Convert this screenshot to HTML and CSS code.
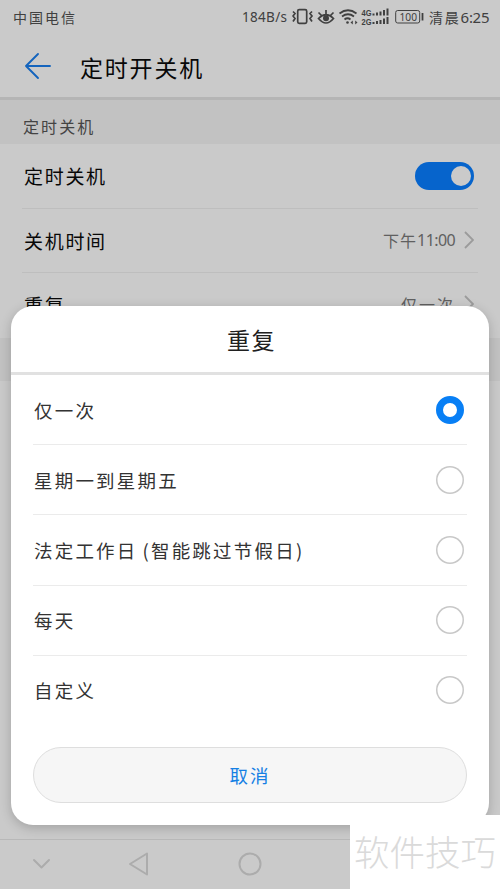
FILE: index.html
```html
<!DOCTYPE html>
<html lang="zh-CN">
<head>
<meta charset="utf-8">
<title>定时开关机</title>
<link rel="stylesheet" href="styles.css">
</head>
<body>
<div class="phone">
  <header class="status">
    <span class="carrier">中国电信</span>
    <span class="speed">184B/s</span>
    <svg class="status-icons" width="132" height="20" viewBox="292 7 132 20" fill="none" stroke="#404040">
      <rect x="297.700" y="9.700" width="9" height="13.600" rx="1.500" stroke-width="1.700"/>
      <path d="M293 11.500l2 2-2 2.500 2 2.500-2 3M312 11.500l-2 2 2 2.500-2 2.500 2 3" stroke-width="1.700"/>
      <path d="M318.500 18.500q7.500-7.500 15 0q-7.500 9-15 0zM318.500 12.500l3 3M326 10v4M333.500 12.500l-3 3" stroke-width="1.700"/>
      <circle cx="326" cy="18.300" r="3" fill="#404040" stroke="none"/>
      <path d="M339.500 13.500q8.500-6.500 17 0M342 16.500q6-4.500 12 0M344.500 19.500q3-2.500 6 0" stroke-width="1.800"/>
      <circle cx="347.500" cy="22.500" r="1.300" fill="#404040" stroke="none"/>
      <path d="M350.500 22.500l2.300-2v4zM357.500 22.500l-2.300-2v4z" fill="#404040" stroke="none"/>
      <g fill="#404040" stroke="none" class="network">
        <text x="361.500" y="15.800" textLength="10" lengthAdjust="spacingAndGlyphs">4G</text><text x="361.500" y="24.500" textLength="10" lengthAdjust="spacingAndGlyphs">2G</text>
        <path d="M372.500 13.500h2v2h-2zM376 12.500h2v3h-2zM379.500 11.500h2v4h-2zM383 10h2v5.500h-2zM386.500 8.500h2v7h-2zM372.500 22h2v2h-2zM376 21h2v3h-2zM379.500 20h2v4h-2zM383 18.500h2v5.500h-2zM386.500 17h2v7h-2z"/>
      </g>
      <rect x="395.700" y="10.500" width="24" height="12.500" rx="2" stroke-width="1"/>
      <path d="M422.500 13v7.500" stroke-width="1.800"/>
      <text class="battery" x="399.500" y="21" textLength="17.500" lengthAdjust="spacingAndGlyphs" fill="#404040" stroke="none">100</text>
    </svg>
    <span class="clock">清晨<b>6:25</b></span>
  </header>
  <div class="titlebar">
    <svg width="28" height="28" viewBox="0 0 28 28" fill="none" stroke="#1464bd" stroke-width="1.900" stroke-linecap="round" stroke-linejoin="round"><path d="M26 14H2M14 2L2 14l12 12"/></svg>
    <h1>定时开关机</h1>
  </div>
  <h2 class="section">定时关机</h2>
  <main class="settings">
    <div class="setting"><span>定时关机</span><i class="toggle"></i></div>
    <div class="setting"><span>关机时间</span><div class="value">下午<b>11:00</b><svg class="chevron" viewBox="0 0 10 18"><path d="M1 1l8 8-8 8"/></svg></div></div>
    <div class="setting"><span>重复</span><div class="value once">仅一次<svg class="chevron" viewBox="0 0 10 18"><path d="M1 1l8 8-8 8"/></svg></div></div>
  </main>
  <div class="section gap"></div>
  <nav class="navbar">
    <svg width="500" height="49" viewBox="0 840 500 49" fill="none" stroke="#acacac" stroke-width="2" stroke-linejoin="round" stroke-linecap="round"><path d="M34 860l7.500 7.500 7.500-7.500M147 853.500v21L130 864z"/><circle cx="250" cy="864" r="10.500"/></svg>
  </nav>

  <section class="dialog">
    <h3>重复</h3>
    <div class="options">
      <div class="option"><span>仅一次</span><i class="radio checked"></i></div>
      <div class="option"><span>星期一到星期五</span><i class="radio"></i></div>
      <div class="option"><span>法定工作日<span class="paren">(</span>智能跳过节假日<span>)</span></span><i class="radio"></i></div>
      <div class="option"><span>每天</span><i class="radio"></i></div>
      <div class="option"><span>自定义</span><i class="radio"></i></div>
    </div>
    <button class="cancel">取消</button>
  </section>
  <div class="watermark">软件技巧</div>
</div>
</body>
</html>
```
FILE: styles.css
```css
* { box-sizing: border-box; }
body { margin: 0; }
body, button { font-family: "Noto Sans CJK SC", sans-serif; }
h1, h2, h3 { margin: 0; font-weight: 400; }
b { font-weight: 400; }
.phone {
  position: relative;
  display: flex;
  flex-direction: column;
  width: 500px;
  height: 889px;
  overflow: hidden;
  background: #cacaca;
}
.status {
  display: flex;
  align-items: center;
  height: 34px;
  padding: 0 11px 0 13px;
  color: #404040;
  font-size: 14px;
  line-height: 20px;
  white-space: nowrap;
}
.carrier { letter-spacing: 2px; font-size: 14px; }
.speed { margin-left: auto; width: 50px; font: 13.500px/20px "Noto Sans", sans-serif; letter-spacing: .3px; }
.status-icons { display: block; flex: none; }
.clock { width: 60px; margin-left: 5px; letter-spacing: 1.800px; }
.clock b { font: 15px/20px "Noto Sans", sans-serif; letter-spacing: -.3px; }
.network { font: bold 8.500px "Liberation Sans", sans-serif; }
.battery { font: 11.500px "Noto Sans", sans-serif; }
.titlebar {
  display: flex;
  align-items: center;
  height: 66px;
  padding-left: 24px;
  border-bottom: 3px solid #b5b5b5;
}
.titlebar h1 { margin-left: 28px; color: #080808; font-size: 23px; line-height: 30px; letter-spacing: 1.800px; padding-top: 2px; }
.section {
  height: 44px;
  padding: 4px 23px 0;
  background: #c2c2c2;
  color: #444;
  font-size: 16px;
  line-height: 44px;
  letter-spacing: 2.100px;
}
.gap { height: 43px; }
.settings { padding: 0 22px; height: 194px; }
.setting {
  display: flex;
  align-items: center;
  justify-content: space-between;
  height: 64.500px;
  padding: 0 4px 0 2px;
  border-bottom: 1px solid #bebebe;
  color: #080808;
  font-size: 19px;
  letter-spacing: 1.700px;
}
.setting:last-child { border: 0; padding-bottom: 2px; }
.toggle {
  display: flex;
  justify-content: flex-end;
  width: 59px;
  height: 28px;
  padding: 4px 3px;
  border-radius: 14px;
  background: #0664cc;
}
.toggle::after { content: ""; width: 20px; height: 20px; border-radius: 50%; background: #cacaca; }
.value { display: flex; align-items: center; color: #606060; font-size: 16px; letter-spacing: 1px; }
.value b { font: 16px/20px "Noto Sans", sans-serif; letter-spacing: -.6px; }
.once { letter-spacing: 2px; }
.chevron { width: 10px; height: 18px; margin-left: 9px; fill: none; stroke: #9b9b9b; stroke-width: 1.800; }
.navbar { height: 50px; margin-top: auto; border-top: 1px solid #b8b8b8; }
.navbar svg { display: block; }
.dialog {
  position: absolute;
  left: 11px;
  top: 306px;
  width: 478px;
  height: 519px;
  border-radius: 22px;
  background: #fff;
  box-shadow: 0 3px 12px rgba(0, 0, 0, .2);
}
.dialog h3 {
  height: 69px;
  padding-left: 3px;
  border-bottom: 3px solid #e1e1e1;
  color: #202020;
  font-size: 23px;
  line-height: 66px;
  letter-spacing: 1.500px;
  text-align: center;
}
.options { padding: 0 22px; }
.option {
  display: flex;
  align-items: center;
  justify-content: space-between;
  height: 70.200px;
  padding: 0 3px 0 1px;
  border-bottom: 1px solid #ebebeb;
  color: #333;
  font-size: 18.500px;
  letter-spacing: 2.200px;
}
.option:last-child { border: 0; padding-bottom: 1px; }
.paren { margin-left: 5px; }
.radio { width: 28px; height: 28px; border-radius: 50%; box-shadow: inset 0 0 0 1.500px #c8c8c8; }
.checked { border: 7px solid #087ff5; box-shadow: none; }
.cancel {
  display: block;
  width: 434px;
  height: 56px;
  margin: 21px 22px 0;
  padding: 0;
  border: 1px solid #dedede;
  border-radius: 28px;
  background: #f6f6f6;
  color: #1580e4;
  font-size: 18.500px;
  letter-spacing: 2px;
}
.watermark {
  position: absolute;
  right: 0;
  bottom: 0;
  width: 150px;
  height: 74px;
  padding-left: 4px;
  background: #fff;
  color: #dadada;
  font-size: 35.500px;
  font-weight: 300;
  line-height: 71px;
  white-space: nowrap;
}
```
